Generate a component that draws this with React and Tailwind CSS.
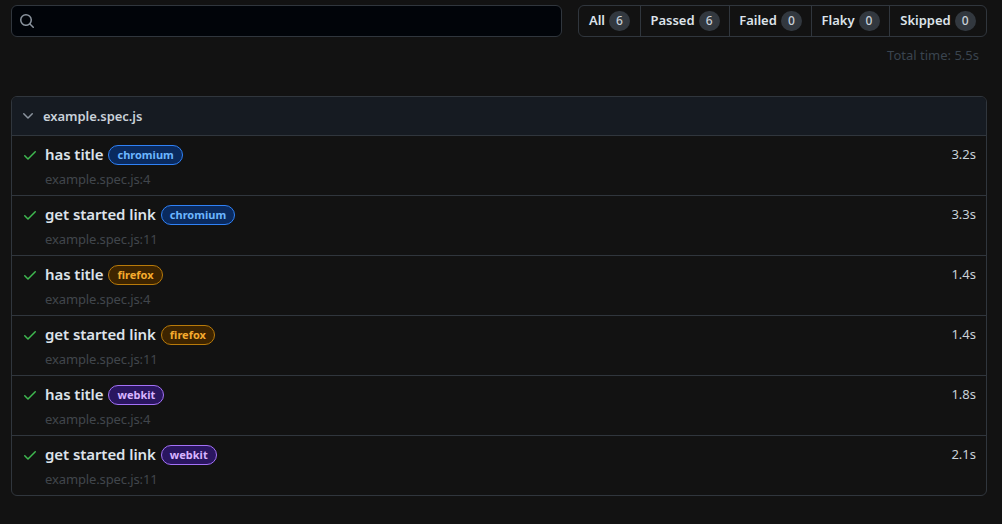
const font = { fontFamily: '"Noto Sans", sans-serif' }

const filters = [
  { label: 'All', count: 6, width: 'w-[61px]' },
  { label: 'Passed', count: 6, width: 'w-[89px]' },
  { label: 'Failed', count: 0, width: 'w-[82px]' },
  { label: 'Flaky', count: 0, width: 'w-[78px]' },
  { label: 'Skipped', count: 0, width: 'w-[97px]' },
]

const tests = [
  { title: 'has title', browser: 'chromium', line: 4, time: '3.2s' },
  { title: 'get started link', browser: 'chromium', line: 11, time: '3.3s' },
  { title: 'has title', browser: 'firefox', line: 4, time: '1.4s' },
  { title: 'get started link', browser: 'firefox', line: 11, time: '1.4s' },
  { title: 'has title', browser: 'webkit', line: 4, time: '1.8s' },
  { title: 'get started link', browser: 'webkit', line: 11, time: '2.1s' },
]

const badgeStyles = {
  chromium: 'bg-[#0a2a5e] border-[#2f81f7] text-[#6cb6ff]',
  firefox: 'bg-[#3d2400] border-[#b87a0a] text-[#f5ab2e]',
  webkit: 'bg-[#2a1660] border-[#a371f7] text-[#d8b4ff]',
}

function SearchIcon() {
  return (
    <svg viewBox="0 0 16 16" className="w-4 h-4 text-[#8b949e]" fill="currentColor">
      <path d="M10.68 11.74a6 6 0 0 1-7.922-8.982 6 6 0 0 1 8.982 7.922l3.04 3.04a.749.749 0 0 1-.326 1.275.749.749 0 0 1-.734-.215ZM11.5 7a4.499 4.499 0 1 0-8.997 0A4.499 4.499 0 0 0 11.5 7Z" />
    </svg>
  )
}

function Chevron() {
  return (
    <svg viewBox="0 0 16 16" className="w-4 h-4 text-[#8b949e]" fill="currentColor">
      <path d="M12.78 5.22a.749.749 0 0 1 0 1.06l-4.25 4.25a.749.749 0 0 1-1.06 0L3.22 6.28a.749.749 0 1 1 1.06-1.06L8 8.939l3.72-3.719a.749.749 0 0 1 1.06 0Z" />
    </svg>
  )
}

function Check() {
  return (
    <svg viewBox="0 0 16 16" className="w-4 h-4 text-[#3fb950]" fill="currentColor">
      <path d="M13.78 4.22a.75.75 0 0 1 0 1.06l-7.25 7.25a.75.75 0 0 1-1.06 0L2.22 9.28a.751.751 0 0 1 .018-1.042.751.751 0 0 1 1.042-.018L6 10.94l6.72-6.72a.75.75 0 0 1 1.06 0Z" />
    </svg>
  )
}

function TestRow({ test }) {
  return (
    <div className="h-[60px] border-t border-[#30363d] flex pl-[10px] pr-[10px] pt-[8px]">
      <div className="pt-[3px] mr-[7px]">
        <Check />
      </div>
      <div className="flex-1">
        <div className="flex items-center h-[22px]">
          <span className="mb-[2px] text-[15px] font-semibold tracking-[-0.07px] text-[#dde3ea]">{test.title}</span>
          <span className={`ml-[5px] h-[20px] px-[8px] rounded-full border flex items-center text-[11px] font-bold ${badgeStyles[test.browser]}`}>
            {test.browser}
          </span>
        </div>
        <div className="mt-[4px] text-[13px] leading-[18px] tracking-[-0.12px] text-[#41464c]">example.spec.js:{test.line}</div>
      </div>
      <div className="text-[13px] leading-[20px] text-[#c9d1d9]">{test.time}</div>
    </div>
  )
}

export default function App() {
  return (
    <div className="min-h-[524px] bg-[#121212] px-[11px] pt-[5px]" style={font}>
      <div className="flex w-[976px]">
        <div className="h-[32px] w-[551px] rounded-md border border-[#30363d] bg-[#010409] flex items-center pl-[7px]">
          <SearchIcon />
        </div>
        <div className="ml-[16px] h-[32px] flex rounded-md border border-[#30363d] overflow-hidden">
          {filters.map((f, i) => (
            <div key={f.label} className={`${f.width} flex items-center justify-center gap-[4px] text-[13px] font-semibold text-[#dde3ea] ${i > 0 ? 'border-l border-[#30363d]' : ''}`}>
              {f.label}
              <span className="h-[20px] min-w-[21px] rounded-full bg-[#32383f] flex items-center justify-center text-[12px] font-medium text-[#c9d1d9]">{f.count}</span>
            </div>
          ))}
        </div>
      </div>
      <div className="text-right pr-[8px] mt-[9px] w-[976px] text-[13px] leading-[18px] text-[#3a444f]">Total time: 5.5s</div>
      <div className="mt-[32px] w-[976px] rounded-md border border-[#30363d] overflow-hidden">
        <div className="h-[38px] bg-[#161b22] flex items-center pl-[8px]">
          <Chevron />
          <span className="ml-[7px] mt-[2px] text-[13px] font-semibold tracking-[-0.05px] text-[#c9d1d9]">example.spec.js</span>
        </div>
        {tests.map((t, i) => (
          <TestRow key={i} test={t} />
        ))}
      </div>
    </div>
  )
}
